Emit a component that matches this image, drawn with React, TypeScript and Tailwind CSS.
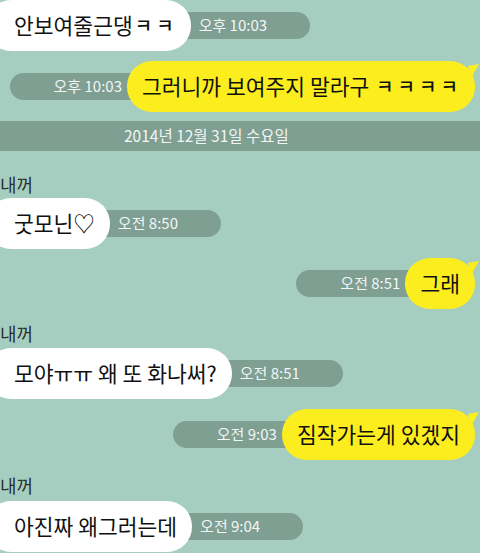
const font = { fontFamily: '"Noto Sans CJK KR", "Noto Sans", sans-serif' };

type Msg = { text: string; time: string };

// small ㅋ jamo are drawn narrower and spaced out in the original
const renderText = (text: string) =>
  text.split('').map((ch, i) =>
    ch === 'ㅋ' ? (
      <span key={i} className="px-[2px] text-[19px] font-medium">
        {ch}
      </span>
    ) : (
      ch
    )
  );

const TimePill = ({ time, side }: { time: string; side: 'left' | 'right' }) => (
  <div
    className={
      side === 'left'
        ? 'relative z-0 -ml-[20px] flex h-[27px] items-center rounded-full bg-[#7f9f93] pl-[28px] pr-[43px] text-[15px] text-[#f2f6f4]'
        : 'relative z-0 -mr-[20px] flex h-[27px] items-center rounded-full bg-[#7f9f93] pl-[44px] pr-[25px] text-[15px] text-[#f2f6f4]'
    }
  >
    {time}
  </div>
);

const Received = ({ text, time, className = '' }: Msg & { className?: string }) => (
  <div className={`flex items-center ${className}`}>
    <div className="relative z-10 -ml-[14px] flex h-[51px] items-center whitespace-pre rounded-[25px] bg-white pl-[28px] pr-[15px] text-[21.5px] text-[#111]">
      {renderText(text)}
    </div>
    <TimePill time={time} side="left" />
  </div>
);

const Sent = ({ text, time, className = '' }: Msg & { className?: string }) => (
  <div className={`flex items-center justify-end pr-[5px] ${className}`}>
    <TimePill time={time} side="right" />
    <div className="relative z-10 flex h-[51px] items-center whitespace-pre rounded-[25px] bg-[#fcee1e] px-[15px] text-[21.5px] text-[#111]">
      {renderText(text)}
      <svg className="absolute -right-[5px] top-[2px]" width="12" height="16" viewBox="0 0 12 16">
        <path d="M0 3 L11 1 L3 15 Z" fill="#fcee1e" />
      </svg>
    </div>
  </div>
);

const Label = ({ className = '' }: { className?: string }) => (
  <div className={`h-[20px] text-[18px] leading-[20px] text-[#2a2f2d] ${className}`}>내꺼</div>
);

export default function App() {
  return (
    <div className="h-[553px] w-[480px] overflow-hidden bg-[#a6cec0]" style={font}>
      <Received text="안보여줄근댕ㅋㅋ" time="오후 10:03" />
      <Sent className="mt-[10px]" text="그러니까 보여주지 말라구 ㅋㅋㅋㅋ" time="오후 10:03" />

      <div className="mt-[9px] flex h-[30px] items-center bg-[#7f9f93] pl-[124px] text-[15.5px] text-[#f2f6f4]">
        2014년 12월 31일 수요일
      </div>

      <Label className="mt-[23px]" />
      <Received className="mt-[4px]" text="굿모닌♡" time="오전 8:50" />
      <Sent className="mt-[9px]" text="그래" time="오전 8:51" />

      <Label className="mt-[14px]" />
      <Received className="mt-[5px]" text="모야ㅠㅠ 왜 또 화나써?" time="오전 8:51" />
      <Sent className="mt-[10px]" text="짐작가는게 있겠지" time="오전 9:03" />

      <Label className="mt-[15px]" />
      <Received className="mt-[6px]" text="아진짜 왜그러는데" time="오전 9:04" />
    </div>
  );
}
